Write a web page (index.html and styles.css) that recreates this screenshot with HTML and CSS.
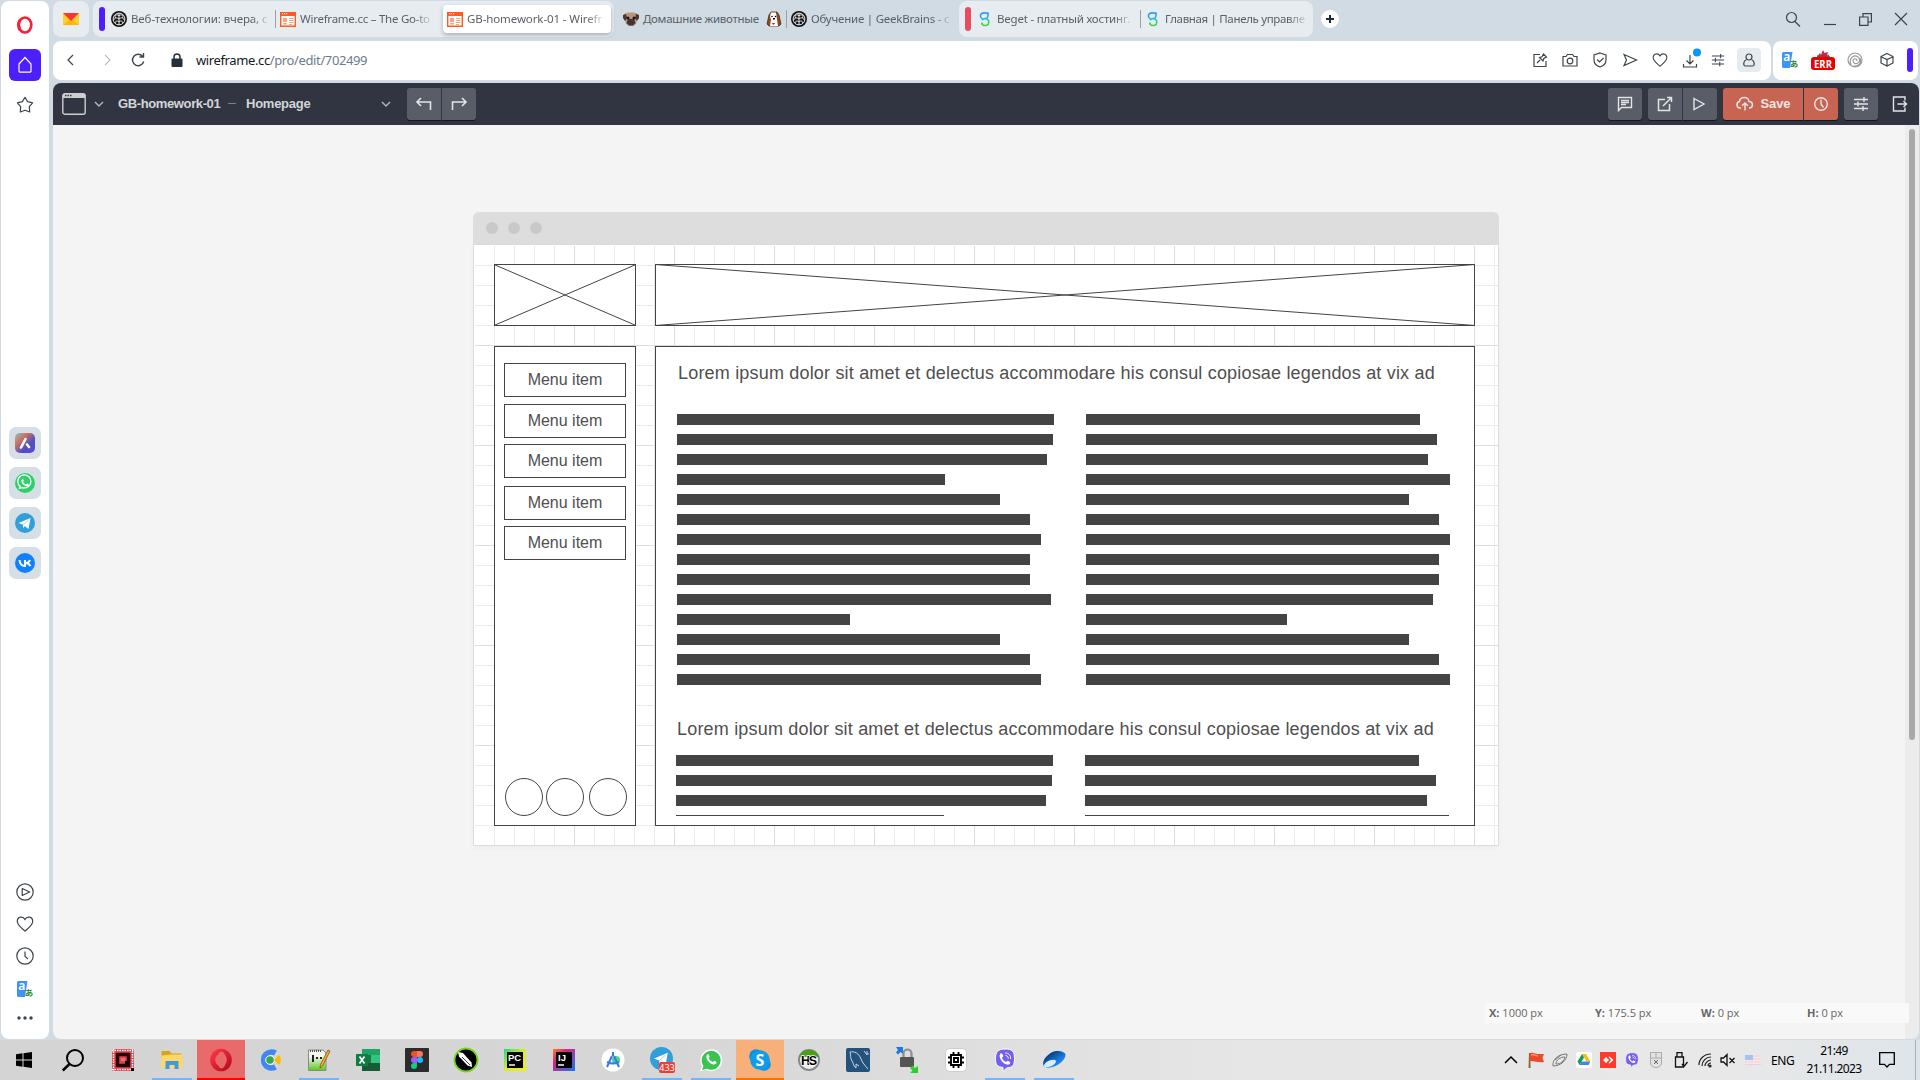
FILE: index.html
```html
<!DOCTYPE html>
<html lang="en">
<head>
<meta charset="utf-8">
<title>GB-homework-01 - Wireframe.cc</title>
<link rel="stylesheet" href="styles.css">
</head>
<body>
<svg class="defs" width="0" height="0">
  <defs>
    <linearGradient id="og" x1="0" y1="0" x2="1" y2="1"><stop offset="0" stop-color="#ff3344"/><stop offset="1" stop-color="#b80d20"/></linearGradient>
    <linearGradient id="beg" x1="0" y1="0" x2="0" y2="1"><stop offset="0" stop-color="#1c8cf0"/><stop offset=".5" stop-color="#20c5d8"/><stop offset="1" stop-color="#45d51c"/></linearGradient>
    <linearGradient id="aria" x1="0" y1="0" x2="1" y2="1"><stop offset="0" stop-color="#6fd0d8"/><stop offset=".3" stop-color="#d4735c"/><stop offset=".65" stop-color="#4b50c8"/><stop offset="1" stop-color="#6a45c8"/></linearGradient>
    <linearGradient id="npp" x1="0" y1="0" x2="0" y2="1"><stop offset=".3" stop-color="#f4f8ee"/><stop offset="1" stop-color="#5cc71e"/></linearGradient>
    <linearGradient id="pc" x1="0" y1="0" x2="1" y2="1"><stop offset="0" stop-color="#21d789"/><stop offset=".5" stop-color="#d8ea3a"/><stop offset="1" stop-color="#f5e92a"/></linearGradient>
    <linearGradient id="ij" x1="0" y1="0" x2="1" y2="1"><stop offset="0" stop-color="#fc801d"/><stop offset=".35" stop-color="#d8218c"/><stop offset="1" stop-color="#087cfa"/></linearGradient>
    <linearGradient id="disk" x1="0" y1="0" x2="1" y2="1"><stop offset="0" stop-color="#061c38"/><stop offset=".6" stop-color="#1478e0"/><stop offset="1" stop-color="#3ba4ff"/></linearGradient>
  </defs>
  <symbol id="gb" viewBox="0 0 16 16"><circle cx="8" cy="8" r="8" fill="#111"/><circle cx="8" cy="8" r="5.900" fill="none" stroke="#fff" stroke-width=".9"/><path d="M8 2v12M8 5C6 2.500 3 4.500 4.500 7M8 5c2-2.500 5-.5 3.500 2M8 8C6 6 3 7 3 9M8 8c2-2 5-1 5 1M8 11c-1.500-2-4-1-3.500 1M8 11c1.500-2 4-1 3.500 1" fill="none" stroke="#fff" stroke-width=".9"/></symbol>
  <symbol id="wf" viewBox="0 0 16 16"><path d="M.7 2.700h14.600v12.600H.7z" fill="#fff" stroke="#ff5a1f" stroke-width="1.400"/><path d="M0 1h16v4H0z" fill="#ff5a1f"/><path d="M2 2.300h1.200v1H2zm2 0h1.200v1H4zm2 0h1.200v1H6z" fill="#fff"/><path d="M3 7h4v4H3zm0 5h4v1.500H3zm6-5h4.500v1H9zm0 2h4.500v1H9zm0 2h4.500v1H9zm0 2h3v1H9z" fill="#ffa37e"/></symbol>
  <symbol id="beget" viewBox="0 0 16 16"><path d="M11.500 2H7a3 3 0 1 0 1 5.500A3 3 0 0 0 11 5V2M8 7.800c5-.6 5 6.700 0 6.700-2.500 0-3.300-1.500-3.300-3M5 9.200c1-1 2-1.400 3-1.400" fill="none" stroke="url(#beg)" stroke-width="1.500"/></symbol>
  <symbol id="heart" viewBox="0 0 18 18"><path d="M9 16C7 14 1.300 10.700 1.300 6.300 1.300 1.500 7 .8 9 4.400 11 .8 16.700 1.500 16.700 6.300 16.700 10.700 11 14 9 16z"/></symbol>
  <symbol id="chev" viewBox="0 0 10 6"><path d="M1 1l4 4 4-4"/></symbol>
  <symbol id="sliders" viewBox="0 0 16 16"><path d="M1 3.500h14M1 8h14M1 12.500h14M11 1v5M5 5.500v5M10 10v5"/></symbol>
  <symbol id="trans" viewBox="0 0 16 16"><path d="M1.500 0h9L8 16H1.500A1.500 1.500 0 0 1 0 14.500v-13A1.500 1.500 0 0 1 1.500 0z" fill="#3d94fb"/><text x="1.200" y="9" font-size="12" fill="#fff" font-weight="600" font-family="Noto Sans, sans-serif">a</text><text x="7.800" y="14.800" font-size="8.500" fill="#2d8b2d" font-weight="700" font-family="Noto Sans CJK JP, sans-serif">あ</text></symbol>
  <symbol id="tg" viewBox="0 0 20 20"><circle cx="10" cy="10" r="10" fill="#2fa0da"/><path d="M3.500 10L15.500 5l-2 11-3.500-2.700L8 15v-3.300z" fill="#fff"/><path d="M8 12l5.500-5" stroke="#9dcbe4" stroke-width=".8"/></symbol>
  <symbol id="wa" viewBox="0 0 20 20"><path d="M4.800 15.400a7 7 0 1 1 2.300 1.200L4 17.300z" fill="none" stroke="#fff" stroke-width="1.400" transform="translate(.8 -.8) scale(.93)"/><path d="M7 6c.8-.6 1.300-.3 1.800 1.400L8 8.500c.7 1.500 1.600 2.300 3 3l1.200-.9c1.500.6 2 .8 1.200 2C11 15.500 4.300 9.500 7 6z" fill="#fff"/></symbol>
  <symbol id="viber" viewBox="0 0 24 24"><path d="M12 1c7 0 9.500 2 9.500 9.500S19 19.500 14 19.800L10 23.500v-4C4 18.800 2.500 17 2.500 10.500S5 1 12 1z" fill="#7360f2" stroke="#fff" stroke-width="1"/><path d="M7.300 5.700c1.300-1 2 0 3 2.300L9 10c.8 2 2 3.200 4 4l1.700-1.300c2.300 1.200 3.200 2 2 3.200C13 19.300 4 10 7.300 5.700z" fill="#fff"/><path d="M12 5c4 0 5.800 2.300 5.600 6M12.500 7.500c1.800.2 2.800 1.200 2.800 3" fill="none" stroke="#fff"/></symbol>
</svg>

<div class="browser">
  <aside class="side">
    <svg class="opera" width="18" height="20" viewBox="0 0 18 20"><ellipse cx="9" cy="10" rx="6.300" ry="7.500" fill="none" stroke="#fa1e35" stroke-width="2.600"/><path d="M4 5a7 8.800 0 0 0 0 10" stroke="#fa1e35" stroke-width="3" fill="none"/></svg>
    <div class="home"><svg class="ln" width="18" height="18" viewBox="0 0 18 18"><path d="M3 8L9 1.500 15 8v7a1.200 1.200 0 0 1-1.200 1.200H4.200A1.200 1.200 0 0 1 3 15z"/></svg></div>
    <svg class="ln star" width="18" height="18" viewBox="0 0 18 18"><path d="M9 1.300l2.600 4.300 5 1.200-3.300 3.900.4 5.300L9 14.200 4.300 16l.4-5.300L1.400 6.800l5-1.200z" stroke-linejoin="round"/></svg>
    <div class="apps">
      <div><svg width="20" height="20"><rect width="20" height="20" rx="5" fill="url(#aria)"/><path d="M6 14.500l4.500-8.500M12 11.500l2 2.500" stroke="#fff" stroke-width="2.600" stroke-linecap="round"/></svg></div>
      <div><svg width="20" height="20"><circle cx="10" cy="10" r="10" fill="#2bd366"/><use href="#wa"/></svg></div>
      <div><svg width="20" height="20"><use href="#tg"/></svg></div>
      <div><svg width="20" height="20"><circle cx="10" cy="10" r="10" fill="#1180ff"/><path d="M4.500 7c.3 3.500 2 6 5.500 6V7M15 7c-.6 1.700-2.300 3-4.500 3 2.200 0 4 1 5 3.200" fill="none" stroke="#fff" stroke-width="2"/></svg></div>
    </div>
    <div class="tools">
      <svg class="ln" width="18" height="18" viewBox="0 0 18 18"><circle cx="9" cy="9" r="8.200"/><path d="M6.200 5.500l7.500 3.500-7.500 3.500z" stroke-linejoin="round"/></svg>
      <svg class="ln" width="18" height="18"><use href="#heart"/></svg>
      <svg class="ln" width="18" height="18" viewBox="0 0 18 18"><circle cx="9" cy="9" r="8.200"/><path d="M9 4.500v4.700l3 3"/></svg>
      <svg width="16" height="16"><use href="#trans"/></svg>
      <svg width="18" height="4"><circle cx="3" cy="2" r="1.700" fill="#3c454d"/><circle cx="9" cy="2" r="1.700" fill="#3c454d"/><circle cx="15" cy="2" r="1.700" fill="#3c454d"/></svg>
    </div>
  </aside>

  <div class="main">
    <div class="tabs">
      <div class="pin"><svg width="16" height="12"><path d="M0 0h16v12H0z" fill="#ffcf2e"/><path d="M0 12l8-6 8 6z" fill="#ffb800"/><path d="M0 0h16L8 8z" fill="#f33"/></svg></div>
      <div class="island first">
        <i class="bar"></i>
        <div class="tab t1"><svg width="16" height="16"><use href="#gb"/></svg><span>Веб-технологии: вчера, с</span></div>
        <div class="tab t2"><svg width="16" height="16"><use href="#wf"/></svg><span>Wireframe.cc – The Go-to</span></div>
        <div class="tab t3"><svg width="16" height="16"><use href="#wf"/></svg><span>GB-homework-01 - Wirefr</span></div>
      </div>
      <div class="tab t4"><svg width="16" height="16" viewBox="0 0 16 16"><path d="M1 3l4-1.500h6L15 3l1 4-2 2-1 4-3 2H6l-3-2-1-4-2-2z" fill="#b7977b"/><path d="M0 4l3-1 1 4-2 3-2-3zM16 4l-3-1-1 4 2 3 2-3z" fill="#51382e"/><path d="M5 8h6l1.500 4-2.500 2.500H6L3.500 12z" fill="#463530"/><circle cx="5" cy="7" r="1.500" fill="#1b1514"/><circle cx="11" cy="7" r="1.500" fill="#1b1514"/></svg><span>Домашние животные</span><svg class="pup" width="16" height="16" viewBox="0 0 16 16"><path d="M5 1h6l2 3 2 9-2 2H3l-2-2 2-9z" fill="#8a4b22" stroke="#3b1d0c" stroke-width=".7"/><path d="M5 1.500h5l1 7 1 6.500H4l1-6.500-1-3z" fill="#fff"/><circle cx="6" cy="5.500" r=".8"/><circle cx="9.500" cy="5.500" r=".8"/><path d="M7 7h2v1.500H7z"/><path d="M5.500 12h4L7.500 14z" fill="#e22"/></svg></div>
      <div class="tab t5"><svg width="16" height="16"><use href="#gb"/></svg><span>Обучение | GeekBrains - с</span></div>
      <div class="island second">
        <i class="bar red"></i>
        <div class="tab t6"><svg width="16" height="16"><use href="#beget"/></svg><span>Beget - платный хостинг.</span></div>
        <div class="tab t7"><svg width="16" height="16"><use href="#beget"/></svg><span>Главная | Панель управле</span></div>
      </div>
      <svg class="plus" width="18" height="18"><circle cx="9" cy="9" r="9" fill="#fff"/><path d="M9 5v8M5 9h8" stroke="#222b33" stroke-width="2"/></svg>
      <div class="win">
        <svg class="ln" width="16" height="16"><circle cx="6.500" cy="6.500" r="5"/><path d="M10 10.500l5 5"/></svg>
        <svg class="ln" width="12" height="14"><path d="M0 12.500h12"/></svg>
        <svg class="ln" width="13" height="13"><path d="M.6 4h8.400v8.400H.6zM4 4V.6h8.400V9H9"/></svg>
        <svg class="ln" width="12" height="12"><path d="M0 0l12 12M12 0L0 12"/></svg>
      </div>
    </div>

    <div class="address">
      <div class="urlbar">
        <svg class="ln back" width="7" height="12"><path d="M6 1L1 6l5 5"/></svg>
        <svg class="ln fwd" width="7" height="12"><path d="M1 1l5 5-5 5"/></svg>
        <svg class="ln reload" width="14" height="14"><path d="M11.500 3.200A5.700 5.700 0 1 0 12.700 8.500M8.500 4H12.500V0" stroke-width="1.400"/></svg>
        <svg class="lock" width="12" height="14"><path d="M3 6V4a3 3 0 0 1 6 0v2" fill="none" stroke="#25303a" stroke-width="1.500"/><rect x=".5" y="5.500" width="11" height="8.500" rx="1" fill="#25303a"/></svg>
        <span class="url">wireframe.cc<em>/pro/edit/702499</em></span>
        <div class="acts">
          <svg class="ln" width="16" height="16"><path d="M8 2.500H2v12h12V9M5 11l3-3M7.500 5.500l3.500 3.500.8-2.500L14.500 5l-3-3L10 4.700z"/></svg>
          <svg class="ln" width="16" height="16"><path d="M1 4.500h3l1.500-2h5l1.500 2h3v9.500H1z"/><circle cx="8" cy="9" r="2.800"/></svg>
          <svg class="ln" width="16" height="16"><path d="M8 1l6 2v5c0 4-3 6-6 7-3-1-6-3-6-7V3zM5 7.500l2.500 2.500L11.500 6"/></svg>
          <svg class="ln" width="16" height="16"><path d="M2 2.500l12.500 5.500L2 13.500 4.500 8z"/></svg>
          <svg class="ln" width="16" height="16"><use href="#heart"/></svg>
          <svg class="ln dl" width="20" height="24"><path d="M9 7v9M5.500 12.500L9 16l3.500-3.500M2.500 16v3h13v-3"/><circle cx="16" cy="4.500" r="4" fill="#0098ff" stroke="none"/></svg>
          <svg class="ln" width="14" height="14"><use href="#sliders"/></svg>
          <div class="user"><svg class="ln" width="14" height="14"><circle cx="7" cy="4" r="3"/><path d="M4.500 6.500C1 8 1 13 3.500 13h7C13 13 13 8 9.500 6.500"/></svg></div>
        </div>
      </div>
      <div class="ext">
        <svg width="16" height="16"><use href="#trans"/></svg>
        <svg width="24" height="20" viewBox="0 0 24 20"><path d="M6 7l3-4 1 2 2-5 1.500 3L17 2l-1 3 3 2z" fill="#b92b48"/><path d="M6 5l3 2H6zm11-1l2 3h-3z" fill="#2b7d46"/><rect y="7" width="24" height="13" rx="3" fill="#e90000"/><text x="12" y="17.500" font-size="11" font-weight="700" text-anchor="middle" fill="#fff" font-family="Open Sans, sans-serif" textLength="18" lengthAdjust="spacingAndGlyphs">ERR</text></svg>
        <svg width="16" height="16" fill="none" stroke="#999" stroke-width="1.200"><circle cx="8" cy="8" r="7"/><path d="M4 13C1 6 8 1 12 6c3 5-5 8-6 3 0-3 4-3 4 0M6 14c6 1 9-3 7-8"/></svg>
        <svg class="ln" width="14" height="16"><path d="M7 1.500l6 3v6.500L7 14 1 11V4.500zM1.500 5L7 7.500 12.500 5M7 7.500V14"/></svg>
        <i class="mark"></i>
      </div>
    </div>

    <div class="app">
      <header class="top">
        <svg width="24" height="22" class="ic proj"><rect x=".8" y=".8" width="22.400" height="20.400" rx="2"/><path d="M1 1h22v4H1z" fill="#ccced2" stroke="none"/><path d="M3 2.500h1.500m1 0H7m1 0h1.500" stroke="#303541"/></svg>
        <svg class="ic c1" width="10" height="6"><use href="#chev"/></svg>
        <b class="pname">GB-homework-01</b><i class="dash"></i><b class="page">Homepage</b>
        <svg class="ic c2" width="10" height="6"><use href="#chev"/></svg>
        <div class="grp undo">
          <button><svg class="ic" width="16" height="16"><path d="M5 2L1 6l4 4M1 6h13.500v8" stroke-width="1.600"/></svg></button>
          <button><svg class="ic" width="16" height="16"><path d="M11 2l4 4-4 4M15 6H1.500v8" stroke-width="1.600"/></svg></button>
        </div>
        <div class="right">
          <div class="grp"><button><svg class="ic" width="16" height="16"><path d="M1.500 1.500h13v10H4.500l-3 3zM4 4.500h8M4 6.500h8M4 8.500h5"/></svg></button></div>
          <div class="grp">
            <button><svg class="ic" width="16" height="16"><path d="M8 3.500H1.500v11h11V8M6 10l8.500-8.500M10 1.500h4.500V6" stroke-width="1.500"/></svg></button>
            <button><svg class="ic" width="16" height="14"><path d="M2 1.500L12 7 2 12.500z"/></svg></button>
          </div>
          <div class="grp save">
            <button class="wide"><svg class="ic" width="18" height="16"><path d="M5 12H4a3.300 3.300 0 0 1-.5-6.500C4 0 12.500 0 13 5.500 17.500 5.500 17.500 12 13 12M9 14.500V7M6 9.700L9 7l3 2.700" stroke-width="1.500"/></svg><b>Save</b></button>
            <button><svg class="ic" width="16" height="16"><circle cx="8" cy="8" r="6.300"/><path d="M8 3.500V8l2.500 3.500"/></svg></button>
          </div>
          <div class="grp"><button><svg class="ic" width="16" height="16" stroke-width="1.600"><use href="#sliders"/></svg></button></div>
          <svg class="ic exit" width="16" height="16"><path d="M13 4.500v-3.500H1.500v14H13v-3.500M5.500 8h9M11.500 5l3 3-3 3"/></svg>
        </div>
      </header>

      <div class="stage">
        <div class="work">
          <div class="frame">
            <div class="chrome"><i></i><i></i><i></i></div>
            <div class="grid">
              <svg class="ph" width="142" height="62"><rect x=".5" y=".5" width="141" height="61"/><path d="M0 .5l142 61M0 61.500L142 .5"/></svg>
              <svg class="ph" width="820" height="62"><rect x=".5" y=".5" width="819" height="61"/><path d="M0 .5l820 61M0 61.500L820 .5"/></svg>
              <div class="box menu">
                <div>Menu item</div><div>Menu item</div><div>Menu item</div><div>Menu item</div><div>Menu item</div>
                <div class="circles"><i></i><i></i><i></i></div>
              </div>
              <div class="box body">
                <p>Lorem ipsum dolor sit amet et delectus accommodare his consul copiosae legendos at vix ad</p>
                <div class="cols">
                  <div class="col"><i style="width:377px"></i><i style="width:376px"></i><i style="width:370px"></i><i style="width:268px"></i><i style="width:323px"></i><i style="width:353px"></i><i style="width:364px"></i><i style="width:353px"></i><i style="width:353px"></i><i style="width:374px"></i><i style="width:173px"></i><i style="width:323px"></i><i style="width:353px"></i><i style="width:364px"></i></div>
                  <div class="col"><i style="width:334px"></i><i style="width:351px"></i><i style="width:342px"></i><i style="width:364px"></i><i style="width:323px"></i><i style="width:353px"></i><i style="width:364px"></i><i style="width:353px"></i><i style="width:353px"></i><i style="width:347px"></i><i style="width:201px"></i><i style="width:323px"></i><i style="width:353px"></i><i style="width:364px"></i></div>
                </div>
                <p class="p2">Lorem ipsum dolor sit amet et delectus accommodare his consul copiosae legendos at vix ad</p>
                <div class="cols c2nd">
                  <div class="col"><i style="width:377px"></i><i style="width:376px"></i><i style="width:370px"></i><i style="width:268px"></i></div>
                  <div class="col"><i style="width:334px"></i><i style="width:351px"></i><i style="width:342px"></i><i style="width:364px"></i></div>
                </div>
              </div>
            </div>
          </div>
          <div class="status"><span><b>X:</b> 1000 px</span><span><b>Y:</b> 175.5 px</span><span><b>W:</b> 0 px</span><span><b>H:</b> 0 px</span></div>
        </div>
        <div class="scroll"><i></i></div>
      </div>
    </div>
  </div>
</div>

<footer class="taskbar">
  <div class="cell start"><svg width="16" height="16"><path d="M0 2.300l6.500-1v6.200H0zM7.500 1.200L16 0v7.500H7.500zM0 8.500h6.500v6.200l-6.500-1zM7.500 8.500H16V16l-8.500-1.200z"/></svg></div>
  <div class="cell start"><svg width="22" height="22" fill="none" stroke="#000" stroke-width="2"><circle cx="13" cy="9" r="8"/><path d="M7.500 15L.8 21.500" stroke-width="2.500"/></svg></div>
  <div class="cell"><svg width="24" height="24"><path d="M1 1h22v22H1z" fill="#e4434b"/><path d="M1 2.500h22M1 21.500h22M2.500 1v22M21.500 1v22" stroke="#fff" stroke-width="1.500" stroke-dasharray="1.500 1"/><path d="M6.500 6.500h11v11h-11z" fill="#d9464c" stroke="#240304" stroke-width="3.500"/><path d="M10 10h4v3h-4z" fill="#f06b6b"/><path d="M14 13h3v3h-3zM20 20h3v3h-3z"/></svg></div>
  <div class="cell on"><svg width="22" height="20"><path d="M.5 1h8l2 2.500h10V8H.5z" fill="#dca215"/><path d="M.5 5.500L10 4.500h11.500V18H.5z" fill="#ffd767"/><path d="M4.500 19v-8h13v8h-4v-4H8.500v4z" fill="#3e9be0"/></svg></div>
  <div class="cell operabg"><svg width="24" height="24"><ellipse cx="12" cy="12" rx="8.300" ry="8.800" fill="none" stroke="url(#og)" stroke-width="5"/><ellipse cx="12.500" cy="12" rx="4.500" ry="8.500" fill="#e96a6a"/></svg></div>
  <div class="cell"><svg width="24" height="24"><path d="M17.500 5A8 8 0 1 0 17.500 19" fill="none" stroke="#4286f4" stroke-width="5.500"/><circle cx="12" cy="12" r="4.300" fill="#34a753" stroke="#fff"/><path d="M16 12l5-5c2.500 3 2.500 7 0 10z" fill="#fbbc05"/></svg></div>
  <div class="cell on"><svg width="24" height="24"><path d="M1.500 2H16l3 3v17.500h-17.500z" fill="url(#npp)" stroke="#888"/><path d="M3 3h12" stroke="#555" stroke-width="2" stroke-dasharray="1 1"/><path d="M6 7v7M9 10h2m2 0h2" stroke="#222" stroke-width="2"/><path d="M21 2l2 1-7.500 15-2.500 2 .5-3.500z" fill="#eeb32e" stroke="#8a4c1a" stroke-width=".8"/></svg></div>
  <div class="cell"><svg width="24" height="24"><path d="M6 1h18v22H6z" fill="#21a366"/><path d="M6 7h9v16H6z" fill="#107c41"/><path d="M15 7h9v8h-9z" fill="#33c481"/><path d="M6 15h18v8H6z" fill="#185c37"/><rect y="6" width="12" height="12" rx="1" fill="#107c41"/><path d="M3.500 8.500l5 7M8.500 8.500l-5 7" stroke="#fff" stroke-width="1.700"/></svg></div>
  <div class="cell"><svg width="24" height="24"><rect width="24" height="24" rx="1" fill="#2c2c2c"/><path d="M12 3H9a3 3 0 0 0 0 6h3z" fill="#f24e1e"/><path d="M12 3h3a3 3 0 0 1 0 6h-3z" fill="#ff7262"/><path d="M12 9H9a3 3 0 0 0 0 6h3z" fill="#a259ff"/><circle cx="15" cy="12" r="3" fill="#1abcfe"/><path d="M12 15H9a3 3 0 1 0 3 3z" fill="#0acf83"/></svg></div>
  <div class="cell"><svg width="26" height="26"><circle cx="13" cy="13" r="11.500" stroke="#76d51b" stroke-width="1.800"/><path d="M5 5l5 1 8.500 9.500L19 20l-4.500-1.500L6 9.500z" fill="#fff"/><path d="M9 10l8 8" stroke="#444"/></svg></div>
  <div class="cell"><svg width="22" height="26"><rect y="2" width="22" height="22" fill="url(#pc)"/><path d="M3 5h16v16H3z"/><text x="4" y="13.500" class="ide">PC</text><path d="M5 18h6" stroke="#fff" stroke-width="1.500"/></svg></div>
  <div class="cell"><svg width="22" height="26"><rect y="2" width="22" height="22" fill="url(#ij)"/><path d="M3 5h16v16H3z"/><text x="5" y="13.500" class="ide">IJ</text><path d="M5 18h6" stroke="#fff" stroke-width="1.500"/></svg></div>
  <div class="cell"><svg width="24" height="24"><circle cx="12" cy="12" r="11.500" fill="#fff"/><circle cx="15" cy="12" r="4" fill="#3ddc84"/><path d="M12 4v4M11 8l-5 11M13 8l5 11M6 14c4 2 8 2 12 0" stroke="#3b78e7" stroke-width="2" fill="none"/></svg></div>
  <div class="cell on"><svg width="26" height="26"><use href="#tg" x="1" width="23" height="23"/><rect x="10" y="15" width="16" height="11" rx="2" fill="#f23c34"/><text x="18" y="24" text-anchor="middle" font-size="9" fill="#fff" font-family="Noto Sans, sans-serif">433</text></svg></div>
  <div class="cell on"><svg width="24" height="24"><path d="M3 18a11 11 0 1 1 4 3.800L.8 23.500z" fill="#fff"/><path d="M4.500 18a9.500 9.500 0 1 1 3.300 2.800L3 22z" fill="#39c450"/><path d="M8 6.500c1-.8 2-.3 2.600 2L9.700 10c.8 2 2 3 4 4l1.600-1.300c2 .8 3 1.400 1.700 3C13.500 19 4.800 11 8 6.500z" fill="#fff"/></svg></div>
  <div class="cell skype"><svg width="24" height="24"><circle cx="8" cy="8" r="6.800" fill="#0f8fe0"/><circle cx="16" cy="16" r="6.800" fill="#0f8fe0"/><circle cx="12" cy="12" r="9.800" fill="#0c9deb"/><text x="12" y="17.500" text-anchor="middle" font-size="16" font-weight="700" fill="#fff" font-family="Open Sans, sans-serif">S</text></svg></div>
  <div class="cell"><svg width="24" height="24"><circle cx="12" cy="12" r="10" fill="#eee" stroke="#888" stroke-width="2"/><path d="M2 9a10.500 10.500 0 0 1 20 0z" fill="#4b9d1c"/><text x="12" y="16.800" text-anchor="middle" font-size="12.500" font-weight="700" stroke="#fff" stroke-width="1.500" paint-order="stroke" font-family="Liberation Sans, sans-serif" textLength="16">HS</text></svg></div>
  <div class="cell"><svg width="24" height="24"><rect width="24" height="24" rx="2" fill="#23537d"/><path d="M4 4c4-1 9 1 11 7l2 4 5 6M4 4c1 3 0 6 2 9s1 5 4 7v-4l3 2M18 3l3 4M21 3v3h2" fill="none" stroke="#c8d6df" stroke-width="1"/></svg></div>
  <div class="cell"><svg width="24" height="26"><path d="M1 0h7v7L5.500 5 3 7.500 1 5.500 3 3z" fill="#1b78e8"/><path d="M8.500 11V6.500a4 4 0 0 1 8 0V11" fill="none" stroke="#8d8d8d" stroke-width="2.200"/><rect x="5" y="10" width="14" height="10" rx="1" fill="#555"/><path d="M23 26h-8l2.500-2.500L15 21l2.500-2.500L20 21l3-2z" fill="#25d52d"/></svg></div>
  <div class="cell"><svg width="22" height="26"><rect x=".5" y="1.500" width="21" height="23" rx="4" fill="#fff" stroke="#ccc"/><path d="M6 8h10v10H6zM9 11h4v4H9zM8.500 5v3m5-3v3m-5 10v3m5-3v3M3 10.500h3m-3 5h3m10-5h3m-3 5h3" fill="none" stroke="#000" stroke-width="1.900"/></svg></div>
  <div class="cell on"><svg width="24" height="26"><use href="#viber" width="24" height="26"/></svg></div>
  <div class="cell on"><svg width="24" height="24"><path d="M1 16C1 10 8 4 14 3c4-.5 9 1 9.500 3.500C24 11 17 17 12 18.500 7 20.500 2 20 1 16z" fill="url(#disk)"/><ellipse cx="8" cy="15.500" rx="6.500" ry="3" fill="#d9edff" transform="rotate(-25 8 15.500)"/></svg></div>

  <div class="tray">
    <svg width="14" height="8" fill="none" stroke="#000" stroke-width="1.500"><path d="M1 7l6-6 6 6"/></svg>
    <svg width="16" height="16"><path d="M1 1h1.500v15H.5z" fill="#96642f"/><path d="M2 1c4-1 5 1 8 1h6l-1.500 4L16 10c-5 1-8-1-14-1z" fill="#eb4b2c"/><path d="M3 3c4-1 5 1 7 1" stroke="#ffb9a6" fill="none"/></svg>
    <svg width="16" height="16" fill="none" stroke="#777"><path d="M1 14C0 7 7 2 15 2c0 6-6 12-14 12zM4 12c0-4 4-7 9-7-1 4-4 7-9 7zM3 8L9 3"/></svg>
    <svg width="16" height="16"><rect width="16" height="16" rx="2" fill="#fff"/><path d="M6 2h4l4.500 7.500h-4z" fill="#fbbc05"/><path d="M6 2l2 3.500L3.500 13 1.500 9.500z" fill="#0f9d58"/><path d="M5.500 9.500h9L12.500 13h-9z" fill="#4285f4"/></svg>
    <svg width="16" height="16"><path d="M0 0h16v16H0z" fill="#ff3b30"/><path d="M3 8l3-3 3 3-3 3zM8.500 5L11 8l-2.500 3 1 .5L13.500 8l-4-3.500z" fill="#fff"/></svg>
    <svg width="16" height="16"><use href="#viber"/></svg>
    <svg width="12" height="16"><path d="M.5.500h11V11c0 6-11 6-11 0z" fill="#e2e2e2" stroke="#aaa"/><path d="M6 1v5M1 6h10" stroke="#aaa"/><path d="M4 8l4 4M8 8l-4 4" stroke="#666"/></svg>
    <svg width="14" height="16" fill="none" stroke="#111" stroke-width="1.300"><path d="M3 5V.7h5V5M1.500 5H9.500v10h-8zM8 12l2 2.500L13.500 10"/></svg>
    <svg width="14" height="16" fill="none" stroke="#222" stroke-width="1.200"><path d="M1 13C1 7 6 2 13 2M4 14c0-5 4-9 9-9M7 14c0-3 3-6 6-6M10 14c0-2 1-3 3-3"/><circle cx="12" cy="14" r="1" fill="#222"/></svg>
    <svg width="16" height="14" fill="none" stroke="#111" stroke-width="1.300"><path d="M1 5h2.500L7 1.500v11L3.500 9H1zM9.500 5l5 5M14.500 5l-5 5"/></svg>
    <svg width="16" height="10"><path d="M0 0h16v10H0z" fill="#f5e8ec"/><path d="M0 1h16M0 4h16M0 7h16M0 9.500h16" stroke="#f3cdd2"/><path d="M0 0h8v5H0z" fill="#a9c3ee"/></svg>
    <span class="lang">ENG</span>
    <div class="clock"><span>21:49</span><span>21.11.2023</span></div>
    <svg class="note" width="16" height="16" fill="none" stroke="#000" stroke-width="1.300"><path d="M.7.700h14.600v11.600H10.500L8 15l-2.500-2.700H.7z"/></svg>
    <i class="edge"></i>
  </div>
</footer>
</body>
</html>
```
FILE: styles.css
```css
* { box-sizing: border-box; }
body { margin: 0; width: 1920px; height: 1080px; overflow: hidden; background: #d0dbe4; font-family: "Noto Sans", "Open Sans", sans-serif; font-size: 12px; color: #222; }
svg { display: block; flex: none; overflow: visible; }
.defs { position: absolute; }
i, em { font-style: normal; }
i { display: block; flex: none; }
span { white-space: nowrap; }
.ln { fill: none; stroke: #3c454d; stroke-width: 1.2; }
.browser { display: flex; height: 1040px; padding: 1px 1px 1px 1px; gap: 4px; }

/* browser sidebar */
.side { width: 48px; background: #fff; border-radius: 8px; display: flex; flex-direction: column; align-items: center; height: 1038px; padding-top: 14px; }
.home { margin-top: 14px; width: 32px; height: 32px; border-radius: 6px; background: #4d1fff; display: grid; place-items: center; }
.home .ln { stroke: #fff; }
.star { margin-top: 15px; }
.apps { margin-top: 313px; display: grid; gap: 8px; }
.apps div { width: 32px; height: 32px; border-radius: 7px; background: #d5dfe5; display: grid; place-items: center; }
.tools { margin-top: 304px; display: flex; flex-direction: column; align-items: center; gap: 14px; }
.tools svg:nth-child(4) { margin-top: 2px; }
.tools svg:nth-child(5) { margin-top: 5px; }
.main { flex: 1; min-width: 0; }

/* tab strip */
.tabs { display: flex; height: 40px; align-items: flex-start; }
.pin, .island { height: 36px; border-radius: 8px; background: #e7ecf0; display: flex; align-items: center; }
.pin { width: 36px; justify-content: center; margin-right: 4px; }
.first { width: 521px; padding-left: 6px; }
.bar { width: 6px; height: 24px; border-radius: 3px; background: #4d1fff; }
.bar.red { background: #e74c60; }
.tab { display: flex; align-items: center; gap: 4px; height: 28px; color: #5b6066; font-size: 11.5px; }
.tab span { padding-bottom: 1px; -webkit-mask-image: linear-gradient(90deg, #000 88%, #0003); mask-image: linear-gradient(90deg, #000 88%, #0003); }
.t1 { width: 164px; margin-left: 6px; }
.t1 span { letter-spacing: -.1px; }
.t2 { width: 168px; padding-left: 4px; border: solid #9aa0a5; border-width: 0 0 0 1px; height: 18px; }
.t2 span { letter-spacing: -.25px; }
.t3 { width: 168px; background: #fff; border-radius: 4px; padding-left: 4px; box-shadow: 0 2px 4px #0004; }
.t3 span { letter-spacing: -.1px; }
.t4 { margin: 4px 0 0 9px; width: 163px; }
.t4 span { width: 119px; letter-spacing: -.3px; -webkit-mask-image: none; mask-image: none; }
.t5 { margin-top: 9px; height: 18px; border-left: 1px solid #9aa0a5; padding-left: 4px; width: 173px; }
.t5 span { letter-spacing: -.22px; }
.second { width: 354px; padding-left: 6px; }
.t6 { margin-left: 6px; width: 163px; }
.t6 span { letter-spacing: -.2px; }
.t7 { border-left: 1px solid #9aa0a5; padding-left: 4px; height: 18px; }
.t7 span { letter-spacing: -.33px; }
.plus { margin: 9px 0 0 8px; }
.win { margin-left: auto; display: flex; align-items: center; gap: 23px; height: 36px; padding-right: 12px; }

/* address bar */
.address { display: flex; gap: 2px; height: 39px; }
.urlbar { width: 1718px; background: #fff; border-radius: 8px; display: flex; align-items: center; padding: 0 10px 2px 14px; }
.fwd { margin-left: 30px; opacity: .35; }
.reload { margin-left: 20px; }
.lock { margin-left: 26px; }
.url { margin-left: 13px; font-size: 13px; color: #111a22; letter-spacing: -.38px; }
.url em { color: #6b7c8b; }
.acts { margin-left: auto; display: flex; align-items: center; gap: 14px; }
.acts .dl { margin: 0 -4px 0 -1px; }
.user { width: 24px; height: 24px; border-radius: 4px; background: #e5ebef; display: grid; place-items: center; margin-left: -2px; }
.acts svg:first-child { margin-left: -1px; }
.ext { flex: 1; background: #fff; border-radius: 8px; display: flex; align-items: center; padding: 0 0 2px 9px; margin-right: 1px; }
.ext svg:nth-child(2) { margin-left: 13px; }
.ext svg:nth-child(3) { margin-left: 12px; }
.ext svg:nth-child(4) { margin-left: 17px; }
.mark { width: 6px; height: 24px; border-radius: 3px; background: #4d1fff; margin-left: 13px; }

/* editor */
.app { margin-top: 3px; height: 956px; border-radius: 8px; overflow: hidden; background: #f4f4f4; }
.top { height: 42px; background: #303541; display: flex; align-items: center; padding: 0 0 1px 9px; font-family: "Liberation Sans", Arial, sans-serif; }
.ic { fill: none; stroke: #e3e4e6; stroke-width: 1.4; }
.proj { stroke: #ccced2; }
.c1 { margin-left: 8px; stroke: #b5b8bd; }
.c2 { margin-left: 70px; stroke: #b5b8bd; }
.top b { font-size: 13px; color: #d3d5d8; white-space: nowrap; }
.pname { margin-left: 14px; width: 102px; letter-spacing: -.38px; }
.dash { width: 8px; height: 1px; background: #7c8088; margin: 0 10px 0 8px; }
.page { width: 65px; letter-spacing: -.25px; }
.grp { display: flex; gap: 1px; }
.grp button { border: 0; padding: 0; margin: 0; width: 34px; height: 32px; background: #595d67; display: flex; align-items: center; justify-content: center; box-shadow: 0 1px 0 #15181d; }
.grp button:first-child { border-radius: 3px 0 0 3px; }
.grp button:last-child { border-radius: 0 3px 3px 0; }
.grp button:only-child { border-radius: 3px; }
.undo { margin-left: 16px; }
.right { margin-left: auto; display: flex; align-items: center; gap: 6px; padding-right: 11px; }
.grp.save button { background: #c86452; }
.grp .wide { width: 80px; gap: 7px; }
.grp .wide b { color: #f4e4e1; letter-spacing: -.1px; }
.exit { margin-left: 8px; }
.stage { height: 914px; display: flex; }
.work { width: 1852px; padding: 87px 0 0 420px; }
.scroll { width: 14px; background: #ececec; padding: 4px 0 0 4px; }
.scroll i { width: 6px; height: 611px; border-radius: 3px; background: #a8a8a8; }
.frame { width: 1026px; height: 634px; }
.chrome { height: 33px; background: #ddd; border-radius: 6px 6px 0 0; display: flex; align-items: center; gap: 10px; padding: 0 0 1px 13px; }
.chrome i { width: 12px; height: 12px; border-radius: 50%; background: #c9c9c9; }
.grid {
  height: 601px; border: 1px solid #ddd; border-top: 0; box-shadow: 0 2px 5px #00000008;
  display: grid; grid-template: 62px 480px / 142px 820px; gap: 20px 19px; padding: 19px 0 0 20px;
  background-color: #fff;
  background-image: linear-gradient(#fff, #fff), linear-gradient(#fff, #fff), linear-gradient(90deg, transparent 99px, #ddd 99px), linear-gradient(transparent 99px, #ddd 99px), linear-gradient(90deg, transparent 19px, #ebebeb 19px), linear-gradient(transparent 19px, #ebebeb 19px);
  background-size: 100% 1px, 1px 100%, 100px 100px, 100px 100px, 20px 20px, 20px 20px;
  background-position: 0 0, 0 0, 1px 1px, 1px 1px, 1px 1px, 1px 1px;
  background-repeat: no-repeat, no-repeat, repeat, repeat, repeat, repeat;
}
.ph { fill: #fff; stroke: #444; stroke-width: 1; }
.box { background: #fff; border: 1px solid #444; font-family: "Liberation Sans", Arial, sans-serif; color: #4f4f4f; display: flex; flex-direction: column; }
.menu { padding: 16px 9px 9px; }
.menu > div:not(.circles) { height: 34px; border: 1px solid #444; display: grid; place-items: center; font-size: 16px; line-height: 32px; margin-bottom: 6px; }
.menu > div:nth-child(1) { margin-bottom: 7px !important; }
.menu > div:nth-child(3) { margin-bottom: 8px !important; }
.circles { margin-top: auto; display: flex; padding-left: 1px; }
.circles i { width: 38px; height: 38px; border: 1px solid #444; border-radius: 50%; margin-right: 3px; }
.circles i:nth-child(2) { margin-right: 5px; }
.body { padding: 14px 0 0 21px; }
.body p { margin: 0 0 0 1px; height: 24px; line-height: 24px; font-size: 18px; letter-spacing: .185px; white-space: nowrap; }
.cols { display: grid; grid-template-columns: 409px 380px; margin-top: 29px; }
.col { display: grid; gap: 9px; align-content: start; }
.col i { height: 11px; background: #444; }
.body .p2 { margin: 32px 0 0 0; }
.c2nd { margin: 14px 0 0 -1px; height: 61px; overflow: hidden; }

.status { margin: 157px 0 0 1012px; width: 424px; height: 20px; background: #f9f9f9; display: grid; grid-template-columns: repeat(4, 106px); align-items: center; padding: 0 0 2px 4px; font-family: "Open Sans", sans-serif; font-size: 11px; color: #666; position: relative; }

/* taskbar */
.taskbar { height: 40px; display: flex; gap: 1px; padding-left: 1px; background: linear-gradient(90deg, #d4d4d4, #d6d6d6 35%, #e6e6e6 65%, #e8e8e8 90%, #dee5ea); }
.cell { width: 48px; height: 40px; display: grid; place-items: center; flex: none; }
.start { padding-right: 2px; }
.on { background: linear-gradient(#76b5f5, #76b5f5) 4px 38px / 40px 2px no-repeat; }
.operabg { background: #e96a6a; border-bottom: 2px solid #f00; padding-top: 2px; }
.skype { background: #f8b07b; border-bottom: 2px solid #ff7200; padding-top: 2px; }
.ide { font: 700 9.500px "Liberation Sans", sans-serif; fill: #fff; }
.tray { margin-left: auto; display: flex; align-items: center; padding-right: 4px; font-family: "Noto Sans", sans-serif; color: #000; }
.tray svg { margin-right: 8px; }
.tray svg:nth-child(1) { margin-right: 10px; }
.tray svg:nth-child(6) { margin-right: 10px; }
.tray svg:nth-child(7) { margin-right: 12px; }
.tray svg:nth-child(8) { margin-right: 10px; }
.tray svg:nth-child(10) { margin-right: 9px; }
.tray svg:nth-child(11) { margin-right: 10px; }
.lang { width: 24px; letter-spacing: -.4px; }
.clock { width: 54px; margin-left: 12px; display: flex; flex-direction: column; align-items: center; line-height: 18px; letter-spacing: -.65px; }
.tray .note { margin: 0 20px 0 18px; }
.edge { width: 1px; height: 40px; background: #a8b0b5; }
```
